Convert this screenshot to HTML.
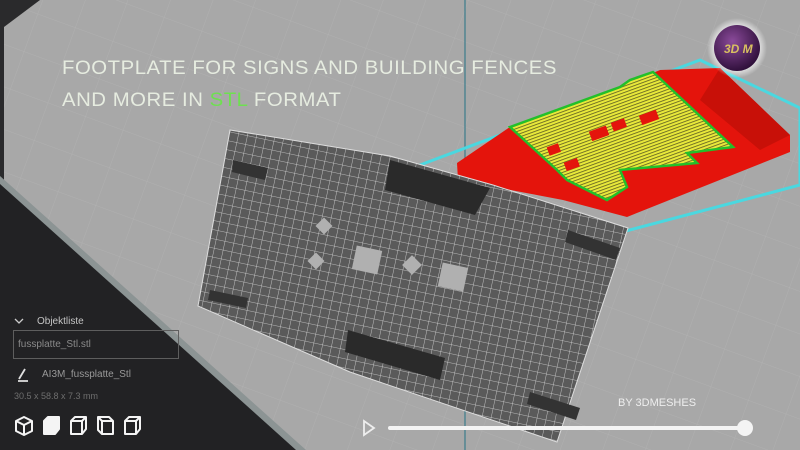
<!DOCTYPE html>
<html><head><meta charset="utf-8"><style>
html,body{margin:0;padding:0;width:800px;height:450px;overflow:hidden;background:#a7a7a7;font-family:"Liberation Sans",sans-serif}
svg{position:absolute;left:0;top:0}
.t{position:absolute;color:#e6ece0;font-family:"Liberation Sans",sans-serif;font-size:19px;letter-spacing:0.5px;white-space:nowrap;transform:scaleX(1.07);transform-origin:left}
.p{position:absolute;color:#b8b8b8;font-size:10px;white-space:nowrap}
</style></head><body>
<svg width="800" height="450" viewBox="0 0 800 450">
<defs>
<pattern id="g" width="40" height="40" patternUnits="userSpaceOnUse" patternTransform="rotate(20)">
<path d="M0 0H40M0 0V40" stroke="#b4b4b4" stroke-width="0.7" fill="none"/></pattern>
<pattern id="m" width="9" height="9" patternUnits="userSpaceOnUse" patternTransform="rotate(12)">
<rect width="9" height="9" fill="#5a5a5a"/><path d="M0 0H9M0 0V9" stroke="#d8d8d8" stroke-width="0.8"/></pattern>
<pattern id="y" width="3" height="3" patternUnits="userSpaceOnUse" patternTransform="rotate(-20)">
<rect width="3" height="3" fill="#e8e83a"/><rect width="3" height="0.8" fill="#5a5a20"/></pattern>
<radialGradient id="lg" cx="0.4" cy="0.35" r="0.7"><stop offset="0" stop-color="#8a4a9a"/><stop offset="1" stop-color="#2a0c35"/></radialGradient>
<radialGradient id="gl"><stop offset="0.6" stop-color="#fff"/><stop offset="1" stop-color="#fff" stop-opacity="0"/></radialGradient>
</defs>
<rect width="800" height="450" fill="#a8a8a8"/>
<rect width="800" height="450" fill="url(#g)"/>
<polygon points="0,0 40,0 0,30" fill="#2a2a2c"/>
<rect x="0" y="0" width="4" height="235" fill="#2a2a2c"/>
<polygon points="0,176 0,450 306,450" fill="#8c9494"/>
<polygon points="0,184 0,450 296,450" fill="#222224"/>
<line x1="465" y1="0" x2="465" y2="450" stroke="#3c7c8c" stroke-width="1.2"/>
<polygon points="420,165 700,60 800,108 800,185 622,232 440,205" fill="none" stroke="#4ad8e0" stroke-width="3" stroke-linejoin="round"/>
<polygon points="457,163 510,127 620,87 660,70 720,68 790,135 790,152 627,217 563,200 458,180" fill="#e4140c"/>
<polygon points="720,68 790,135 760,150 700,100" fill="#c81008"/>
<polygon points="510,127 620,87 630,80 653,72 733,147 687,153 697,163 620,170 627,187 607,200 567,180 557,170" fill="url(#y)" stroke="#22c02a" stroke-width="2.5"/>
<rect x="590" y="128" width="18" height="10" fill="#e4140c" transform="rotate(-20 600 133)"/>
<rect x="612" y="120" width="14" height="9" fill="#e4140c" transform="rotate(-20 620 125)"/>
<rect x="640" y="112" width="18" height="10" fill="#e4140c" transform="rotate(-20 650 117)"/>
<rect x="548" y="145" width="12" height="9" fill="#e4140c" transform="rotate(-20 554 150)"/>
<rect x="565" y="160" width="14" height="9" fill="#e4140c" transform="rotate(-20 572 165)"/>
<polygon points="230,130 390,156 493,185 628,228 557,442 350,372 198,306" fill="url(#m)" stroke="#ddd" stroke-width="1"/>
<polygon points="390,160 490,188 475,215 385,190" fill="#2a2a2a"/>
<polygon points="348,330 445,358 440,380 345,352" fill="#2a2a2a"/>
<polygon points="233,160 268,168 265,180 232,172" fill="#333"/>
<polygon points="210,290 248,298 246,308 208,300" fill="#333"/>
<polygon points="568,230 620,248 616,260 565,242" fill="#333"/>
<polygon points="530,392 580,408 576,420 527,404" fill="#333"/>
<rect x="354" y="248" width="26" height="24" fill="#b0b0b0" transform="rotate(12 367 260)"/>
<rect x="440" y="265" width="26" height="24" fill="#b0b0b0" transform="rotate(12 453 277)"/>
<rect x="405" y="258" width="14" height="14" fill="#b0b0b0" transform="rotate(45 412 265)"/>
<rect x="318" y="220" width="12" height="12" fill="#b0b0b0" transform="rotate(45 324 226)"/>
<rect x="310" y="255" width="12" height="12" fill="#b0b0b0" transform="rotate(45 316 261)"/>
<circle cx="737" cy="48" r="30" fill="url(#gl)"/>
<circle cx="737" cy="48" r="23" fill="url(#lg)"/>
<text x="724" y="53" font-family="Liberation Sans" font-size="12" font-style="italic" font-weight="bold" fill="#d8c060">3D M</text>
<path d="M364 421 L374 428 L364 435 Z" fill="none" stroke="#eee" stroke-width="1.8"/>
<line x1="390" y1="428" x2="745" y2="428" stroke="#f4f4f4" stroke-width="4" stroke-linecap="round"/>
<circle cx="745" cy="428" r="8" fill="#f4f4f4"/>
<path d="M15 319 l4 4 l4 -4" fill="none" stroke="#ccc" stroke-width="1.3"/>
<rect x="13.5" y="330.5" width="165" height="28" fill="none" stroke="#5e5e5e"/>
<path d="M18 381 H28 M19 379 L25 369" stroke="#e0e0e0" stroke-width="1.8" fill="none"/>
<g fill="none" stroke="#f4f4f4" stroke-width="2" stroke-linejoin="round">
<path d="M24 417 L32 421 L32 431 L24 435 L16 431 L16 421 Z M16 421 L24 425 L32 421 M24 425 V435"/>
<path d="M44 421 L48 417 L59 417 L59 429 L55 434 L44 434 Z" fill="#f4f4f4"/>
<path d="M71 421 L75 417 L86 417 L86 429 L82 434 L71 434 Z M71 421 H82 V434 M82 421 L86 417"/>
<path d="M98 417 L109 417 L113 421 L113 434 L102 434 L98 430 Z M102 421 H113 M102 421 V434 M98 417 L102 421"/>
<path d="M125 421 L129 417 L140 417 L140 429 L136 434 L125 434 Z M125 421 H136 V434 M136 421 L140 417"/>
</g>
</svg>
<div class="t" style="left:62px;top:58px">FOOTPLATE FOR SIGNS AND BUILDING FENCES</div>
<div class="t" style="left:62px;top:90px">AND MORE IN <span style="color:#6ee050">STL</span> FORMAT</div>
<div class="p" style="left:37px;top:316px;color:#c4c4c4">Objektliste</div>
<div class="p" style="left:18px;top:339px;color:#8a8a8a">fussplatte_Stl.stl</div>
<div class="p" style="left:42px;top:369px;color:#999">AI3M_fussplatte_Stl</div>
<div class="p" style="left:14px;top:391px;color:#6e6e6e;font-size:9px">30.5 x 58.8 x 7.3 mm</div>
<div class="p" style="left:618px;top:397px;color:#eee;font-size:11px">BY 3DMESHES</div>
</body></html>
